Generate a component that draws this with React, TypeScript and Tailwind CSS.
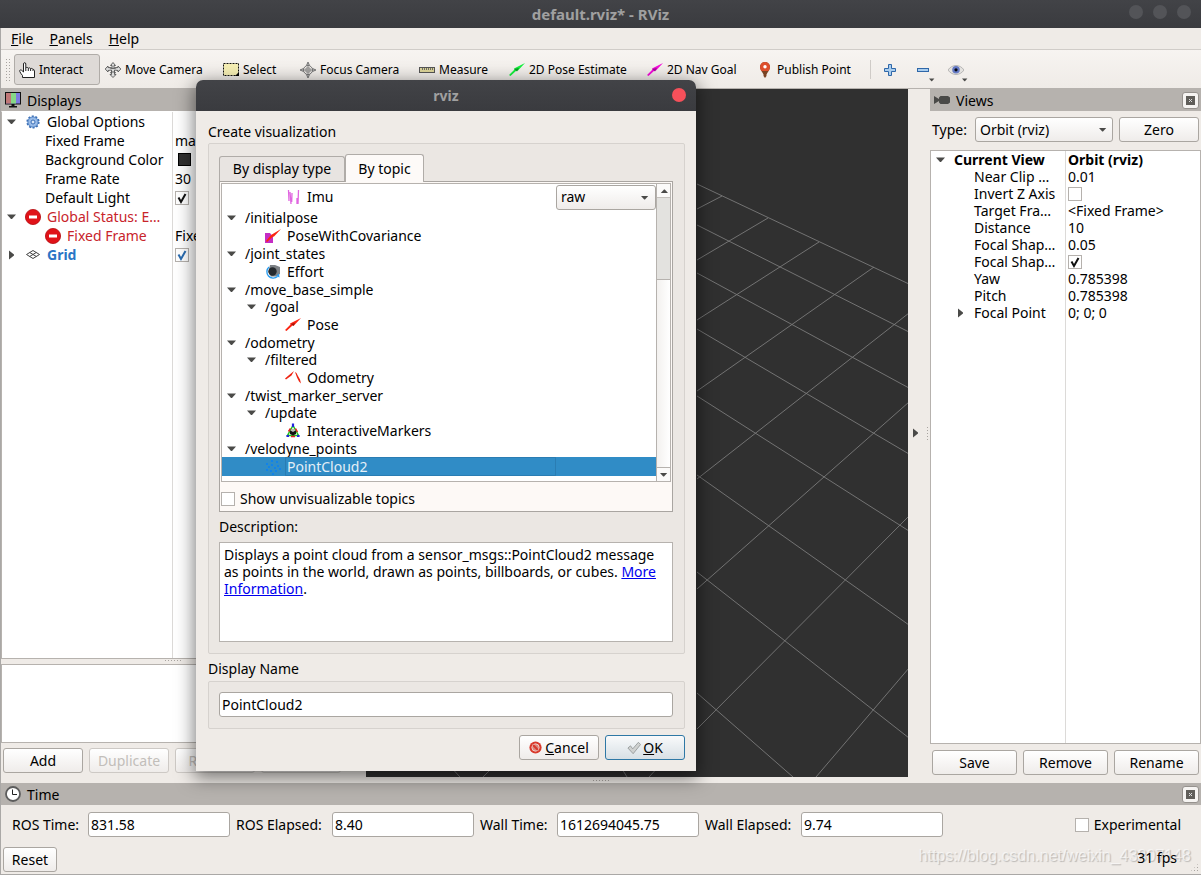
import { useState, type ReactNode } from "react";

const BUTTON =
  "flex h-[25px] items-center justify-center rounded-[3px] border border-[#aaa6a1] bg-linear-to-b from-white to-[#efecea] text-black disabled:border-[#cdc9c5] disabled:text-[#c2beba]";

const INPUT =
  "h-[25px] rounded-[3px] border border-[#aaa6a1] bg-white px-[2px] text-black outline-none";

type IconName =
  | "hand"
  | "move"
  | "select"
  | "focus"
  | "measure"
  | "pose"
  | "nav"
  | "pin"
  | "gear"
  | "error"
  | "grid"
  | "imu"
  | "covariance"
  | "effort"
  | "redArrow"
  | "odometry"
  | "markers"
  | "cloud"
  | "monitor"
  | "camera"
  | "clock"
  | "cancel"
  | "ok"
  | "plus"
  | "minus"
  | "eye";

const icons: Record<IconName, ReactNode> = {
  hand: (
    <path
      d="M4.500 10V2c0-1.800 2.300-1.800 2.300 0v4c.6-.9 2.200-.7 2.500.3.7-.7 2-.5 2.300.4.8-.6 2.200-.2 2.400.8.8-.2 1.500.3 1.500 1.200V15.500H3.500V13.500C2.500 12.500 1.500 11 .8 9.500c-.6-1.300.8-2.200 1.900-1.200zM6.800 6v3M9.300 6.300V9M11.600 6.700V9M14 7.500V9"
      fill="#fff"
      stroke="#222"
    />
  ),
  move: (
    <g fill="#ddd" stroke="#555" strokeWidth="0.900">
      <path d="M8 .5l2.500 3H9V6l4-.5V4l2.800 3L13 10V8.500L9.500 8v4.500h1.500L8 15.500l-3-3h1.500V8L3 8.500V10L.2 7 3 4v1.500L7 6V3.500H5.500z" />
      <path d="M4.500 5.500c2 1.500 5 1.500 7 0M5 11c2-1.500 4-1.500 6 0" fill="none" />
    </g>
  ),
  select: (
    <>
      <rect x="0.500" y="1.500" width="15" height="12" fill="#f6efb4" stroke="#111" strokeDasharray="2 1" />
      <path d="M16 10v4h-4z" fill="#000" />
    </>
  ),
  focus: (
    <g fill="none" stroke="#777">
      <circle cx="8" cy="8" r="4.500" />
      <path d="M8 4v8M4 8h8M6 6h4v4H6z" strokeWidth="0.800" />
      <path d="M8 0l1.500 3.500h-3zM8 16l1.500-3.500h-3zM0 8l3.500-1.500v3zM16 8l-3.500-1.500v3z" fill="#bbb" />
    </g>
  ),
  measure: (
    <>
      <rect x="0.500" y="5.500" width="15" height="5" fill="#ddd59a" stroke="#555" />
      <path d="M3.500 6v2M5.500 6v2M7.500 6v2M9.500 6v2M11.500 6v2M13.500 6v2" stroke="#555" strokeWidth="0.800" />
    </>
  ),
  pose: (
    <>
      <path d="M0 13l5.500-5.500-.5-1L16 1 9 8.500H7.500L1.500 14z" fill="#12f03c" />
      <path d="M5 7l3 2.500L10 6z" fill="#0a9b25" />
    </>
  ),
  nav: (
    <>
      <path d="M0 13l5.500-5.500-.5-1L16 1 9 8.500H7.500L1.500 14z" fill="#f30bd9" />
      <path d="M5 7l3 2.500L10 6z" fill="#a4069a" />
    </>
  ),
  redArrow: (
    <>
      <path d="M0 13l5.500-5.500-.5-1L16 1 9 8.500H7.500L1.500 14z" fill="#fb2412" />
      <path d="M6 7l2.500 2L10 6z" fill="#9c1409" />
    </>
  ),
  pin: (
    <>
      <path d="M8 0a5 5 0 0 0-5 5c0 3 2.500 5 3.500 7.500V14L8 16l1.500-2v-1.500C10.500 10 13 8 13 5a5 5 0 0 0-5-5z" fill="#7a4424" />
      <path d="M8 0a5 5 0 0 0-5 5c0 1.500.8 3 1.500 4h7c.700-1 1.500-2.500 1.500-4a5 5 0 0 0-5-5z" fill="#dd4f2c" />
      <circle cx="8" cy="4.800" r="1.700" fill="#fff" />
    </>
  ),
  gear: (
    <>
      <circle cx="8" cy="8" r="5.600" fill="#87aee0" stroke="#3b6fb5" strokeWidth="2" strokeDasharray="2 1.500" />
      <circle cx="8" cy="8" r="5" fill="#98bbe8" stroke="#5585c4" strokeWidth="0.800" />
      <circle cx="8" cy="8" r="2" fill="#dce8f7" stroke="#3b6fb5" />
    </>
  ),
  error: (
    <>
      <circle cx="8" cy="8" r="7.600" fill="#e01218" stroke="#b50a0f" strokeWidth="0.800" />
      <rect x="4" y="6.500" width="8" height="3" fill="#fff" />
    </>
  ),
  grid: (
    <path
      d="M8 3.500l6.500 4L8 11.500l-6.500-4zM4.800 5.500l6.500 4M11.200 5.500l-6.500 4"
      fill="none"
      stroke="#444"
    />
  ),
  imu: (
    <path d="M3.500 1l.5 11M5 3l1 12M7 4l-.3 9M13.500 1L13 15M12 9v6" fill="none" stroke="#e065e0" strokeWidth="1.300" />
  ),
  covariance: (
    <>
      <path d="M0 5h5l3 4v6H0z" fill="#c42cc4" />
      <path d="M1 13l5-6L16 1 9 8.500 7.500 9 2 14z" fill="#fb2412" />
    </>
  ),
  effort: (
    <>
      <path d="M5 1h5l5 2v7l-4 2.500H6L3.500 8z" fill="#7d8185" />
      <circle cx="7.500" cy="7.500" r="4.200" fill="#262a2e" />
      <path d="M4 3a6.200 6.200 0 1 0 8.500 9.500" fill="none" stroke="#2b9df0" strokeWidth="1.400" />
      <path d="M14.500 13.500l-.5-4-3 2.500z" fill="#2b9df0" />
    </>
  ),
  odometry: (
    <path d="M0 8.500l3.500-3L9 1 6.500 5.500 1 9.500zM10 2l1.500 1 1.500 3 2 3.500 1 4-2-2-2-4z" fill="#ee2412" />
  ),
  markers: (
    <>
      <path d="M8 2.500l5.500 10h-11z" fill="none" stroke="#1ec01e" strokeWidth="1.500" />
      <path d="M8 .5v3.500M1.500 13h2.500M12 13h2.500" stroke="#2222dd" strokeWidth="2.200" />
      <path d="M3.500 8.500l2-3M10.500 5.500l2 3.500M6 13.500h4" stroke="#e02020" strokeWidth="1.500" />
      <path d="M5 8l3-2 3 2v3l-3 1.500L5 11z" fill="#111" />
      <path d="M5.500 7.500l2.500-2 2.500 2L8 9z" fill="#bbb" />
    </>
  ),
  cloud: (
    <path
      d="M6 1h2v2H6zM11 2h2v2h-2zM1 4h2v2H1zM6 5h2v2H6zM12 6h2v2h-2zM3 7h2v2H3zM9 8h2v2H9zM14 9h2v2h-2zM1 10h2v2H1zM5 11h2v2H5zM10 11h2v2h-2zM7 14h2v2H7z"
      fill="#1183ea"
    />
  ),
  monitor: (
    <>
      <rect x="0.500" y="0.500" width="15" height="11.500" fill="#7d7be0" stroke="#111" />
      <path d="M1 1h5v10.500H1z" fill="#c07777" />
      <path d="M6 1h5v10.500H6z" fill="#86d886" />
      <path d="M6.500 12h3v2H12v1.500H4V14h2.500z" fill="#111" />
    </>
  ),
  camera: <path d="M0 4l5 3V5.500L6.500 4H14l2 1.500v5L14 12H6.500L5 10.500V9l-5 3z" fill="#4a4a48" />,
  clock: (
    <>
      <circle cx="8" cy="8" r="7" fill="#fff" stroke="#5c5c5c" strokeWidth="1.800" />
      <path d="M7.500 3.500v5h4.500" fill="none" stroke="#222" />
    </>
  ),
  cancel: (
    <>
      <circle cx="8" cy="8" r="7.500" fill="#d93a2c" />
      <circle cx="8" cy="8" r="4.500" fill="#d98a80" stroke="#f1cfca" strokeWidth="1.200" />
      <path d="M5 5l6 6" stroke="#d93a2c" strokeWidth="2.600" />
    </>
  ),
  ok: <path d="M1 8l3-2.500L6.500 9 13 1.500 15.500 4 7 14.500z" fill="#cfd1d0" stroke="#8e9392" strokeWidth="0.900" />,
  plus: <path d="M6.500 2.500h3v4h4v3h-4v4h-3v-4h-4v-3h4z" fill="#a9cdee" stroke="#2f67a8" />,
  minus: <rect x="2.500" y="6.500" width="11" height="3" fill="#a9cdee" stroke="#2f67a8" />,
  eye: (
    <>
      <path d="M0 8c4-6 12-6 16 0-4 6-12 6-16 0z" fill="#e4e2df" stroke="#aaa" strokeWidth="0.800" />
      <circle cx="8" cy="7.800" r="3.800" fill="#6479c4" />
      <circle cx="8" cy="7.800" r="1.600" fill="#05070f" />
    </>
  ),
};

function Icon({ name, className = "size-4" }: { name: IconName; className?: string }) {
  return (
    <svg viewBox="0 0 16 16" className={`shrink-0 ${className}`} aria-hidden="true">
      {icons[name]}
    </svg>
  );
}

function Arrow({ open = true, className = "" }: { open?: boolean; className?: string }) {
  return (
    <svg viewBox="0 0 10 10" className={`size-[10px] shrink-0 ${className}`} aria-hidden="true">
      <path d={open ? "M0 2.500h9L5 7h-1z" : "M2 .5v9l5-4v-1z"} fill="#4a4a48" />
    </svg>
  );
}

function Checkbox({ id, checked = false, label, tint = "#111" }: { id: string; checked?: boolean; label?: string; tint?: string }) {
  const [on, setOn] = useState(checked);
  return (
    <span className="relative block size-[14px] shrink-0">
      <input
        id={id}
        type="checkbox"
        aria-label={label}
        checked={on}
        onChange={() => setOn(!on)}
        className="block size-[14px] appearance-none border border-[#b5b1ad] bg-white"
      />
      {on && (
        <svg viewBox="0 0 14 14" className="pointer-events-none absolute inset-0">
          <path d="M3.500 6.500l2.500 4.500 4.500-8" fill="none" stroke={tint} strokeWidth="2" />
        </svg>
      )}
    </span>
  );
}

function Dots({ className }: { className: string }) {
  return <span className={`bg-[radial-gradient(circle,#a8a4a0_1px,transparent_1px)] bg-[length:3px_3px] ${className}`} />;
}

function DockHeader({ icon, title, closable = true }: { icon: IconName; title: string; closable?: boolean }) {
  return (
    <header className="flex h-[22px] shrink-0 items-center gap-[6px] bg-[#b6b2ae] pr-[2px] pl-1">
      <Icon name={icon} />
      <h2 className="flex-1 pt-[2px]">{title}</h2>
      {closable && (
        <button aria-label={`Close ${title}`} className="flex size-[17px] items-center justify-center rounded-[3px] border border-[#96928e] bg-[#f6f4f2]">
          <svg viewBox="0 0 9 9" className="size-[9px]">
            <rect width="9" height="9" fill="#605e5a" />
            <path d="M3 3l3 3M6 3L3 6" stroke="#ddd" />
          </svg>
        </button>
      )}
    </header>
  );
}

const tools: { icon: IconName; label: string; width: string }[] = [
  { icon: "hand", label: "Interact", width: "w-[86px]" },
  { icon: "move", label: "Move Camera", width: "w-[118px]" },
  { icon: "select", label: "Select", width: "w-[77px]" },
  { icon: "focus", label: "Focus Camera", width: "w-[119px]" },
  { icon: "measure", label: "Measure", width: "w-[90px]" },
  { icon: "pose", label: "2D Pose Estimate", width: "w-[138px]" },
  { icon: "nav", label: "2D Nav Goal", width: "w-[110px]" },
  { icon: "pin", label: "Publish Point", width: "w-[112px]" },
];

function Toolbar() {
  return (
    <div className="flex h-[39px] shrink-0 items-center border-b border-[#b6b2ae] bg-linear-to-b from-[#f7f4f1] to-[#efebe7] pt-px pl-1 text-[12px]">
      <Dots className="mr-[3px] h-6 w-[6px]" />
      {tools.map((tool, i) => (
        <button
          key={tool.label}
          className={`flex h-[31px] items-center gap-1 rounded-[3px] border pl-1 whitespace-nowrap ${tool.width} ${
            i === 0 ? "border-[#b0aca8] bg-[#dedad7]" : "border-transparent"
          }`}
        >
          <Icon name={tool.icon} />
          {tool.label}
        </button>
      ))}
      <span className="mr-[5px] ml-[6px] h-[19px] w-px bg-[#cfcbc7]" />
      <button aria-label="Add tool" className="w-[33px] pl-[6px]">
        <Icon name="plus" />
      </button>
      <button aria-label="Remove tool" className="relative w-[33px] pl-[6px]">
        <Icon name="minus" />
        <Arrow className="absolute top-[13px] left-[18px] scale-60" />
      </button>
      <button aria-label="Toolbar style" className="relative w-[33px] pl-[6px]">
        <Icon name="eye" />
        <Arrow className="absolute top-[13px] left-[18px] scale-60" />
      </button>
    </div>
  );
}

const displayRows: {
  label: string;
  pad: string;
  open?: boolean;
  icon?: IconName;
  tone?: string;
  value?: ReactNode;
}[] = [
  { label: "Global Options", pad: "pl-[5px]", open: true, icon: "gear" },
  { label: "Fixed Frame", pad: "pl-[43px]", value: "map" },
  {
    label: "Background Color",
    pad: "pl-[43px]",
    value: <span className="ml-[3px] block size-[13px] border border-black bg-[#303030]" />,
  },
  { label: "Frame Rate", pad: "pl-[43px]", value: "30" },
  { label: "Default Light", pad: "pl-[43px]", value: <Checkbox id="default-light" checked label="Default Light" /> },
  { label: "Global Status: E…", pad: "pl-[5px]", open: true, icon: "error", tone: "text-[#c8242b]" },
  { label: "Fixed Frame", pad: "pl-[43px]", icon: "error", tone: "text-[#c8242b]", value: "Fixed" },
  {
    label: "Grid",
    pad: "pl-[5px]",
    open: false,
    icon: "grid",
    tone: "font-bold text-[#2a76c6]",
    value: <Checkbox id="grid-enabled" checked label="Grid" tint="#2a6cb0" />,
  },
];

function DisplaysPanel() {
  return (
    <section className="flex w-[343px] shrink-0 flex-col">
      <DockHeader icon="monitor" title="Displays" />
      <div className="flex-1 overflow-hidden border border-[#b6b2ae] border-t-white bg-white bg-[linear-gradient(#dcdad8,#dcdad8)] bg-[length:1px_100%] bg-[position:170px_0] bg-no-repeat">
        <table className="w-full table-fixed">
          <colgroup>
            <col className="w-[171px]" />
            <col />
          </colgroup>
          <tbody>
            {displayRows.map((row, i) => (
              <tr key={i} className="h-[19px] leading-[19px]">
                <td className={`p-0 whitespace-nowrap ${row.pad} ${row.tone ?? ""}`}>
                  <span className="flex items-center">
                    {row.open !== undefined && <Arrow open={row.open} className="mr-2" />}
                    {row.icon && <Icon name={row.icon} className="mr-[6px] size-4" />}
                    {row.label}
                  </span>
                </td>
                <td className="p-0 pl-[2px]">{row.value}</td>
              </tr>
            ))}
          </tbody>
        </table>
      </div>
      <div className="flex h-[5px] justify-center">
        <Dots className="h-[3px] w-[18px]" />
      </div>
      <div className="h-[79px] border border-[#b6b2ae] bg-white" />
      <div className="flex gap-[6px] px-[2px] pt-[5px] pb-1">
        <button className={`w-20 ${BUTTON}`}>Add</button>
        {["Duplicate", "Remove", "Rename"].map((label) => (
          <button key={label} disabled className={`w-20 ${BUTTON}`}>
            {label}
          </button>
        ))}
      </div>
    </section>
  );
}

// Ground plane lines, in the coordinates of the 543 x 688 viewport.
const gridLines = [
  "M331 95L543 195",
  "M331 136L543 243",
  "M331 184L543 299",
  "M331 240L543 365",
  "M331 307L543 442",
  "M331 386L543 536",
  "M331 483L543 649",
  "M331 604L427 688",
  "M331 120L356 107",
  "M331 171L402 129",
  "M331 231L453 153",
  "M331 302L508 178",
  "M331 390L543 224",
  "M331 500L543 313",
  "M331 640L543 427",
  "M450 688L543 579",
  "M82 675L94 688",
  "M253 675L261 688",
  "M130 675L117 688",
  "M295 675L283 688",
];

function Viewport() {
  return (
    <main className="min-w-0 flex-1 bg-[#303030]">
      <svg viewBox="0 0 543 688" preserveAspectRatio="xMinYMin slice" className="h-full w-full">
        <path d={gridLines.join("")} fill="none" stroke="#7a7a7a" strokeWidth="0.900" />
      </svg>
    </main>
  );
}

function CollapseStrip({ side }: { side: "left" | "right" }) {
  return (
    <div className="flex w-[22px] shrink-0 items-center justify-between pl-[3px]">
      <button aria-label={`Collapse ${side} dock`}>
        <Arrow open={false} />
      </button>
      <Dots className="mr-px h-[15px] w-[3px]" />
    </div>
  );
}

const viewRows: { label: string; value: ReactNode; arrow?: boolean }[] = [
  { label: "Near Clip …", value: "0.01" },
  { label: "Invert Z Axis", value: <Checkbox id="invert-z" label="Invert Z Axis" /> },
  { label: "Target Fra…", value: "<Fixed Frame>" },
  { label: "Distance", value: "10" },
  { label: "Focal Shap…", value: "0.05" },
  { label: "Focal Shap…", value: <Checkbox id="focal-fixed" checked label="Focal Shape Fixed Size" /> },
  { label: "Yaw", value: "0.785398" },
  { label: "Pitch", value: "0.785398" },
  { label: "Focal Point", value: "0; 0; 0", arrow: true },
];

function ViewsPanel() {
  return (
    <section className="flex w-[271px] shrink-0 flex-col">
      <DockHeader icon="camera" title="Views" />
      <div className="flex items-center gap-[6px] px-[2px] pt-[6px] pb-2">
        <label htmlFor="view-type" className="w-[37px]">
          Type:
        </label>
        <div className="relative flex-1">
          <select id="view-type" className={`w-full appearance-none pl-1 ${BUTTON}`}>
            <option>Orbit (rviz)</option>
            <option>FPS (rviz)</option>
          </select>
          <Arrow className="pointer-events-none absolute top-2 right-[5px] scale-80" />
        </div>
        <button className={`w-20 ${BUTTON}`}>Zero</button>
      </div>
      <div className="flex-1 border border-[#b6b2ae] bg-white bg-[linear-gradient(#dcdad8,#dcdad8)] bg-[length:1px_100%] bg-[position:134px_0] bg-no-repeat">
        <table className="w-full table-fixed">
          <colgroup>
            <col className="w-[135px]" />
            <col />
          </colgroup>
          <thead>
            <tr className="h-[17px] text-left leading-[17px]">
              <th className="p-0 pl-[5px]">
                <span className="flex items-center gap-2 whitespace-nowrap">
                  <Arrow />
                  Current View
                </span>
              </th>
              <th className="p-0 pl-[2px]">Orbit (rviz)</th>
            </tr>
          </thead>
          <tbody>
            {viewRows.map((row, i) => (
              <tr key={i} className="h-[17px] leading-[17px]">
                <td className="p-0 pl-[25px] whitespace-nowrap">
                  <span className="flex items-center gap-2">
                    <span className="w-[10px]">{row.arrow && <Arrow open={false} />}</span>
                    {row.label}
                  </span>
                </td>
                <td className="p-0 pl-[2px]">{row.value}</td>
              </tr>
            ))}
          </tbody>
        </table>
      </div>
      <div className="flex gap-[6px] px-[2px] pt-[6px] pb-[2px]">
        {["Save", "Remove", "Rename"].map((label) => (
          <button key={label} className={`flex-1 ${BUTTON}`}>
            {label}
          </button>
        ))}
      </div>
    </section>
  );
}

const timeFields = [
  { id: "ros-time", label: "ROS Time:", value: "831.58", width: "w-[70px]" },
  { id: "ros-elapsed", label: "ROS Elapsed:", value: "8.40", width: "w-[90px]" },
  { id: "wall-time", label: "Wall Time:", value: "1612694045.75", width: "w-[71px]" },
  { id: "wall-elapsed", label: "Wall Elapsed:", value: "9.74", width: "w-[90px]" },
];

function TimePanel() {
  return (
    <section className="relative shrink-0">
      <DockHeader icon="clock" title="Time" />
      <div className="flex items-center gap-[6px] pt-[7px] pr-5 pl-[11px] whitespace-nowrap">
        {timeFields.map((field) => (
          <div key={field.id} className="flex items-center gap-[6px]">
            <label htmlFor={field.id} className={field.width}>
              {field.label}
            </label>
            <input id={field.id} readOnly value={field.value} className={`w-[142px] ${INPUT}`} />
          </div>
        ))}
        <div className="ml-auto flex items-center gap-[5px]">
          <Checkbox id="experimental" />
          <label htmlFor="experimental">Experimental</label>
        </div>
      </div>
      <p className="pointer-events-none absolute right-[10px] bottom-[8px] font-['Liberation_Sans',sans-serif] text-[16px] text-white/60 [text-shadow:1px_1px_1px_#00000038]">
        https://blog.csdn.net/weixin_43807148
      </p>
      <div className="relative flex items-center justify-between pt-[10px] pr-6 pb-[2px] pl-[2px]">
        <button className={`w-[54px] ${BUTTON}`}>Reset</button>
        <span className="pb-1">31 fps</span>
      </div>
      <Dots className="absolute right-[2px] bottom-[2px] size-[9px] [clip-path:polygon(100%_0,100%_100%,0_100%)]" />
    </section>
  );
}

const topics: { label: string; pad: string; icon?: IconName; selected?: boolean }[] = [
  { label: "/initialpose", pad: "pl-[5px]" },
  { label: "PoseWithCovariance", pad: "pl-[43px]", icon: "covariance" },
  { label: "/joint_states", pad: "pl-[5px]" },
  { label: "Effort", pad: "pl-[43px]", icon: "effort" },
  { label: "/move_base_simple", pad: "pl-[5px]" },
  { label: "/goal", pad: "pl-[25px]" },
  { label: "Pose", pad: "pl-[63px]", icon: "redArrow" },
  { label: "/odometry", pad: "pl-[5px]" },
  { label: "/filtered", pad: "pl-[25px]" },
  { label: "Odometry", pad: "pl-[63px]", icon: "odometry" },
  { label: "/twist_marker_server", pad: "pl-[5px]" },
  { label: "/update", pad: "pl-[25px]" },
  { label: "InteractiveMarkers", pad: "pl-[63px]", icon: "markers" },
  { label: "/velodyne_points", pad: "pl-[5px]" },
  { label: "PointCloud2", pad: "pl-[43px]", icon: "cloud", selected: true },
];

function TopicTree() {
  return (
    <div className="flex border border-[#b6b2ae] bg-white">
      <ul className="flex-1 pt-px pb-[5px]" role="tree">
        <li role="treeitem" className="flex h-6 items-center pl-[63px]">
          <Icon name="imu" className="mr-[6px] size-4" />
          <span className="flex-1">Imu</span>
          <span className="relative">
            <select aria-label="Imu transport" className={`w-[100px] appearance-none pl-1 ${BUTTON}`}>
              <option>raw</option>
            </select>
            <Arrow className="pointer-events-none absolute top-2 right-[6px] scale-80" />
          </span>
        </li>
        {topics.map((topic) => (
          <li
            key={topic.label}
            role="treeitem"
            aria-selected={topic.selected}
            className={`flex items-center ${topic.pad} ${topic.icon ? "h-[19px]" : "h-[17px]"} ${
              topic.selected ? "bg-[#308cc6] text-[#e4eff7]" : ""
            }`}
          >
            {topic.icon ? <Icon name={topic.icon} className="mr-1 size-4" /> : <Arrow className="mr-2" />}
            {topic.selected ? (
              <span className="h-[19px] w-[271px] border border-[#2a7db3] pl-px leading-[17px]">{topic.label}</span>
            ) : (
              <span className={topic.icon ? "pl-[2px]" : ""}>{topic.label}</span>
            )}
          </li>
        ))}
      </ul>
      <div className="flex w-[14px] flex-col border-l border-[#b6b2ae]">
        <button aria-label="Scroll up" className="flex h-[14px] items-center justify-center border-b border-[#c5c1bd] bg-[#fbfaf9]">
          <Arrow className="scale-80 rotate-180" />
        </button>
        <div className="h-[81px] bg-[#e3e2df]" />
        <div className="flex-1 border-y border-[#b6b2ae] bg-linear-to-r from-[#f3f1ef] to-white" />
        <button aria-label="Scroll down" className="flex h-[13px] items-center justify-center bg-[#fbfaf9]">
          <Arrow className="scale-80" />
        </button>
      </div>
    </div>
  );
}

function CreateDialog() {
  const [name, setName] = useState("PointCloud2");

  return (
    <div
      role="dialog"
      aria-labelledby="dialog-title"
      className="absolute top-20 left-[196px] w-[500px] overflow-hidden rounded-t-[7px] bg-[#efebe7] shadow-[0_5px_18px_2px_rgba(0,0,0,0.5)]"
    >
      <div className="relative flex h-[31px] items-center justify-center bg-linear-to-b from-[#424347] to-[#3a3b3f]">
        <h1 id="dialog-title" className="font-bold text-[#a0a0a0]">
          rviz
        </h1>
        <button aria-label="Close" className="absolute top-2 right-[10px] size-[14px] rounded-full bg-[#f6505a]" />
      </div>
      <div className="pt-[11px] pr-[11px] pb-[11px] pl-3">
        <h2 className="leading-5">Create visualization</h2>
        <div className="mt-px rounded-[2px] border border-[#d6d2ce] bg-[#ebe7e3] pt-[10px] pr-[11px] pb-[11px] pl-[10px]">
          <div role="tablist" className="flex items-end">
            <button role="tab" aria-selected="false" className="h-[25px] w-[126px] rounded-t-[3px] border border-b-0 border-[#b0aca8] bg-[#e8e4e1]">
              By display type
            </button>
            <button role="tab" aria-selected="true" className="relative -mb-px h-7 w-[79px] rounded-t-[3px] border border-b-0 border-[#b0aca8] bg-[#fdfaf8]">
              By topic
            </button>
          </div>
          <div role="tabpanel" className="border border-[#a9a5a1] bg-[#fdf9f6] p-px">
            <TopicTree />
            <div className="flex h-7 items-center gap-[5px] pt-[5px]">
              <Checkbox id="unvisualizable" />
              <label htmlFor="unvisualizable">Show unvisualizable topics</label>
            </div>
          </div>
          <h3 className="py-[5px] leading-5">Description:</h3>
          <div className="h-[100px] border border-[#b6b2ae] bg-white px-1 pt-[3px] leading-[17px]">
            Displays a point cloud from a sensor_msgs::PointCloud2 message as points in the world, drawn as points, billboards, or
            cubes.{" "}
            <a href="#more" className="text-[#0000ee] underline">
              More Information
            </a>
            .
          </div>
        </div>
        <label htmlFor="display-name" className="mt-[5px] block leading-5">
          Display Name
        </label>
        <div className="mt-[2px] rounded-[2px] border border-[#d6d2ce] bg-[#ebe7e3] pt-[10px] pr-[11px] pb-[11px] pl-[10px]">
          <input id="display-name" value={name} onChange={(e) => setName(e.target.value)} className={`block w-full ${INPUT}`} />
        </div>
        <div className="mt-[6px] flex justify-end gap-[6px]">
          <button className={`w-20 gap-[3px] ${BUTTON}`}>
            <Icon name="cancel" className="size-[13px]" />
            <span>
              <u>C</u>ancel
            </span>
          </button>
          <button className="flex h-[25px] w-20 items-center justify-center gap-[2px] rounded-[3px] border border-[#2f78a5] bg-linear-to-b from-[#f9fafb] to-[#d8e0e5]">
            <Icon name="ok" className="size-[14px]" />
            <span>
              <u>O</u>K
            </span>
          </button>
        </div>
      </div>
    </div>
  );
}

export default function App() {
  return (
    <div className="relative flex h-screen min-h-[860px] flex-col overflow-hidden bg-[#efebe7] font-['Noto_Sans',sans-serif] text-[14px] leading-5 text-black">
      <header className="flex h-7 shrink-0 items-center justify-center bg-linear-to-b from-[#424347] to-[#3a3b3f]">
        <h1 className="text-[15px] font-bold text-[#a0a0a0]">default.rviz* - RViz</h1>
        <div className="absolute top-[5px] right-[10px] flex gap-[10px]">
          <button aria-label="Minimize" className="size-[14px] rounded-full bg-[#535458]" />
          <button aria-label="Maximize" className="size-[14px] rounded-full bg-[#535458]" />
          <button aria-label="Close window" className="size-[14px] rounded-full bg-[#535458]" />
        </div>
      </header>
      <div className="flex min-h-0 flex-1 flex-col border-b border-l border-[#aaa8a6]">
        <nav className="flex h-[22px] shrink-0 items-center gap-4 border-b border-[#d0ccc8] pl-[10px]">
          <button>
            <u>F</u>ile
          </button>
          <button>
            <u>P</u>anels
          </button>
          <button>
            <u>H</u>elp
          </button>
        </nav>
        <Toolbar />
        <div className="flex min-h-0 flex-1">
          <DisplaysPanel />
          <CollapseStrip side="left" />
          <Viewport />
          <CollapseStrip side="right" />
          <ViewsPanel />
        </div>
        <div className="flex h-[6px] shrink-0 items-center justify-center">
          <Dots className="h-[3px] w-[18px]" />
        </div>
        <TimePanel />
      </div>
      <CreateDialog />
    </div>
  );
}
